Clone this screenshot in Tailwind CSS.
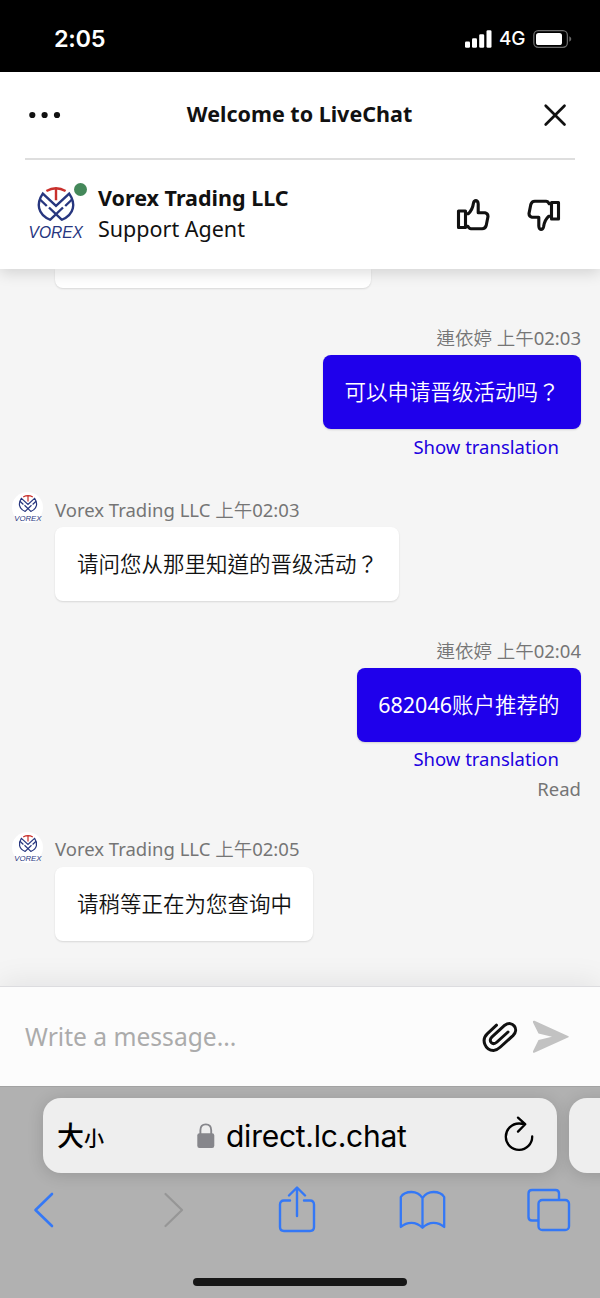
<!DOCTYPE html>
<html lang="zh-Hant">
  <head>
    <meta charset="UTF-8" />
    <meta name="viewport" content="width=device-width, initial-scale=1.0">
    <title>LiveChat</title>
    <script src="https://cdn.jsdelivr.net/npm/@tailwindcss/browser@4"></script>
  </head>
  <body class="w-[600px] h-[1298px] overflow-hidden bg-[#f5f5f5] text-[#111] font-['Noto_Sans','Noto_Sans_CJK_TC',sans-serif]">

    <!-- shared logo -->
    <svg class="hidden">
      <symbol id="vorex" viewBox="0 0 56 56">
        <g fill="none" stroke-width="2.4">
          <path stroke="#c9302c" d="M18.4 6Q28 0.6 37.6 6M28 3V15.2" />
          <g stroke="#27367f">
            <path d="M22.6 35C9 29.5 8.3 18 14.8 8.6L28 20.8L41.2 8.6C47.7 18 47 29.5 33.4 35" />
            <path d="M12 14.5L18.8 21M44 14.5L37.2 21" />
            <path d="M21 22.5L34.2 35.2M35 22.5L21.8 35.2" />
          </g>
        </g>
        <text x="0.5" y="53.3" textLength="54.5" lengthAdjust="spacingAndGlyphs" font-family="Liberation Sans, sans-serif" font-size="15.8" font-style="italic" fill="#27367f">VOREX</text>
      </symbol>
    </svg>

    <div class="flex flex-col h-full">
      <!-- status bar -->
      <div class="h-[72px] shrink-0 bg-black text-white flex items-center justify-between pl-[54px] pr-[28px] pt-[5px] font-['Inter',sans-serif]">
        <span class="text-[23.5px] leading-8 font-semibold tracking-[-0.3px]">2:05</span>
        <div class="flex items-center">
          <svg class="w-[27px] h-[18px]" viewBox="0 0 27 18" fill="#fff">
            <rect x="0" y="11.5" width="5" height="6.3" rx="1.3" />
            <rect x="7" y="8.3" width="5" height="9.5" rx="1.3" />
            <rect x="14.2" y="4.3" width="5" height="13.5" rx="1.3" />
            <rect x="21.5" y="0.2" width="5" height="17.6" rx="1.3" />
          </svg>
          <span class="ml-[7px] w-[34px] text-[19px] leading-6 font-medium tracking-[-0.3px] pt-px">4G</span>
          <svg class="w-[39px] h-[18px]" viewBox="0 0 39 18">
            <rect x="0.8" y="0.7" width="33.6" height="16.6" rx="4.5" fill="none" stroke="#6b6b6b" stroke-width="1.3" />
            <rect x="3" y="3" width="26" height="12" rx="2.6" fill="#fff" />
            <path d="M36.3 6.2Q38.3 7.2 38.3 9T36.3 11.8Z" fill="#6b6b6b" />
          </svg>
        </div>
      </div>

      <!-- chat header -->
      <header class="h-[197px] shrink-0 bg-white px-[25px] relative z-10 shadow-[0_4px_14px_rgba(0,0,0,0.14)]">
        <div class="h-[88px] flex items-center justify-between border-b-2 border-[#dedede] pl-1 pr-[8px]">
          <svg class="w-8 h-6" viewBox="0 0 32 24" fill="#111">
            <circle cx="3.3" cy="12" r="3.1" /><circle cx="15.6" cy="12" r="3.1" /><circle cx="28" cy="12" r="3.1" />
          </svg>
          <h1 class="text-[21.5px] leading-8 font-bold pb-[3px] ml-[-5px]">Welcome to LiveChat</h1>
          <svg class="w-6 h-6" viewBox="0 0 24 24" fill="none" stroke="#111" stroke-width="2.7" stroke-linecap="round">
            <path d="M2.7 2.7L21.5 21.5M21.5 2.7L2.7 21.5" />
          </svg>
        </div>
        <div class="flex items-center h-[109px] pl-[3px] pr-[14px]">
          <div class="relative mt-[-3px]">
            <svg class="w-[56px] h-[56px]"><use href="#vorex" /></svg>
            <span class="absolute right-[-3px] top-[-2px] w-[13px] h-[13px] rounded-full bg-[#44885a]"></span>
          </div>
          <div class="ml-[14px] mt-[-4px] text-[21.5px] leading-[31px]">
            <p class="font-bold">Vorex Trading LLC</p>
            <p>Support Agent</p>
          </div>
          <svg class="ml-auto w-[34px] h-[34px]" viewBox="0 0 34 34" fill="none" stroke="#111" stroke-width="3.1" stroke-linejoin="round">
            <path id="thumb" d="M2.5 13H9.5V29.5H2.5ZM9.5 15.8H12.2Q16.5 12 17.5 5Q18 2.6 20 2.6Q22 2.8 22.2 6V14.8H29Q32 15.5 32 18.5L30.2 27.5Q29.2 30.7 26.2 30.7H15Q13 30.7 11.8 28.2H9.5" />
          </svg>
          <svg class="ml-[37px] w-[34px] h-[34px] rotate-180" viewBox="0 0 34 34" fill="none" stroke="#111" stroke-width="3.1" stroke-linejoin="round">
            <use href="#thumb" />
          </svg>
        </div>
      </header>

      <!-- messages -->
      <main class="flex-1 min-h-0 flex flex-col items-start pl-[55px] pr-[19px] text-[18.5px] leading-[25px] text-[#757575]">
        <div class="w-[316px] h-[19px] rounded-b-lg bg-white shadow-[0_1px_2px_rgba(0,0,0,0.12)]"></div>

        <div class="self-end flex flex-col items-end mt-[37px]">
          <p class="h-[25px] font-[350]">連依婷 上午<span class="font-normal">02:03</span></p>
          <p class="mt-[5px] h-[74px] pb-[2px] px-[21.5px] flex items-center rounded-lg bg-[#1f00eb] text-white text-[21.5px] font-[350] shadow-[0_1px_2px_rgba(0,0,0,0.15)]">可以申请晋级活动吗？</p>
          <p class="mt-[5px] h-[25px] mr-[22px] text-[#2000e0]">Show translation</p>
        </div>

        <div class="relative mt-[38px]">
          <div class="absolute left-[-43px] top-[-5px] w-[31px] h-[31px] rounded-full bg-white flex items-center justify-center">
            <svg class="w-[28px] h-[28px] shrink-0"><use href="#vorex" /></svg>
          </div>
          <p class="h-[25px]">Vorex Trading LLC <span class="font-[350]">上午</span>02:03</p>
          <p class="mt-[5px] h-[74px] pb-[2px] w-[344px] px-[22px] flex items-center rounded-lg bg-white text-[#111] text-[21.5px] font-[350] whitespace-nowrap shadow-[0_1px_2px_rgba(0,0,0,0.12)]">请问您从那里知道的晋级活动？</p>
        </div>

        <div class="self-end flex flex-col items-end mt-[37px]">
          <p class="h-[25px] font-[350]">連依婷 上午<span class="font-normal">02:04</span></p>
          <p class="mt-[5px] h-[74px] pb-[2px] px-[21.5px] flex items-center rounded-lg bg-[#1f00eb] text-white text-[21.5px] shadow-[0_1px_2px_rgba(0,0,0,0.15)]">682046<span class="font-[350]">账户推荐的</span></p>
          <p class="mt-[4px] h-[25px] mr-[22px] text-[#2000e0]">Show translation</p>
          <p class="mt-[5px] h-[25px]">Read</p>
        </div>

        <div class="relative mt-[35px]">
          <div class="absolute left-[-43px] top-[-4px] w-[31px] h-[31px] rounded-full bg-white flex items-center justify-center">
            <svg class="w-[28px] h-[28px] shrink-0"><use href="#vorex" /></svg>
          </div>
          <p class="h-[25px]">Vorex Trading LLC <span class="font-[350]">上午</span>02:05</p>
          <p class="mt-[6px] h-[74px] pb-[2px] w-[258px] px-[22px] flex items-center rounded-lg bg-white text-[#111] text-[21.5px] font-[350] whitespace-nowrap shadow-[0_1px_2px_rgba(0,0,0,0.12)]">请稍等正在为您查询中</p>
        </div>
      </main>

      <!-- message box -->
      <div class="h-[100px] shrink-0 relative bg-[#fcfcfc] border-t border-[#dcdcdf] flex items-center pl-[25px] pr-[30px] shadow-[0_-4px_28px_rgba(0,0,20,0.08)]">
        <span class="text-[24.6px] leading-8 text-[#ababab]">Write a message...</span>
        <svg class="ml-auto w-[36px] h-[34px] mt-[2px]" viewBox="0 0 36 34" fill="none" stroke="#111" stroke-width="3" stroke-linecap="round" stroke-linejoin="round">
          <path d="M14.5 4.2L5.2 12.8C-1.2 19 3.4 29.5 11.6 29.4C14.6 29.3 16.5 27.8 18.4 26L31 14.6C37.6 8.2 30.5 -1.2 22.8 4.2L10 15.8C5.6 20 10.6 25 15 21L26 11" />
        </svg>
        <svg class="ml-[14px] w-[38px] h-[34px]" viewBox="0 0 38 34" fill="#c2c2c2">
          <path d="M2.5 0.8Q0.4 0.2 1 2.4L6.5 13.4L20 16.8L6.5 20L1 31.2Q0.4 33.5 2.8 32.6L36.5 17.3Q37.2 16.8 36.5 16.3Z" />
        </svg>
      </div>

      <!-- browser toolbar -->
      <footer class="h-[212px] shrink-0 relative overflow-hidden bg-[#b1b1b1] border-t border-[#a2a2a2] flex flex-col font-['Inter','Noto_Sans_CJK_TC',sans-serif]">
        <div class="flex gap-[12px] pl-[43px] mt-[11px]">
          <div class="w-[514px] h-[75px] shrink-0 rounded-[18px] bg-[#eee] shadow-[0_2px_16px_rgba(0,0,0,0.15)] flex items-center pl-[14px] pr-[22px] text-black">
            <span class="w-[140px] pt-[5px] flex items-baseline leading-8 font-medium"><span class="text-[27px]">大</span><span class="text-[20px]">小</span></span>
            <svg class="w-[18px] h-[26px]" viewBox="0 0 18 26">
              <rect x="0.3" y="10.2" width="17" height="14.8" rx="2.2" fill="#86868b" />
              <path d="M3.4 11V7.2Q3.4 1.4 8.8 1.4T14.2 7.2V11" fill="none" stroke="#86868b" stroke-width="1.9" />
            </svg>
            <span class="ml-[11px] text-[30px] leading-9 tracking-[-0.25px]">direct.lc.chat</span>
            <svg class="ml-auto w-[32px] h-[36px] mt-[-3px]" viewBox="0 0 32 36" fill="none" stroke="#000" stroke-width="2.3" stroke-linecap="round" stroke-linejoin="round">
              <path d="M29.2 20.5A13.2 13.2 0 1 1 16 7.5Q19 7.5 22 8.2M15 1.6L22.2 8.2L15 15.6" />
            </svg>
          </div>
          <div class="w-[60px] h-[75px] shrink-0 rounded-[18px] bg-[#eee] shadow-[0_2px_16px_rgba(0,0,0,0.15)]"></div>
        </div>
        <div class="flex items-center justify-between h-[74px] pl-[33px] pr-[29px]">
          <svg class="w-[22px] h-[48px]" viewBox="0 0 22 48" fill="none" stroke="#3478f6" stroke-width="2.6" stroke-linecap="round" stroke-linejoin="round"><path d="M19 8L2.5 24L19 40" /></svg>
          <svg class="w-[22px] h-[48px] ml-[26px]" viewBox="0 0 22 48" fill="none" stroke="#969696" stroke-width="2.2" stroke-linecap="round" stroke-linejoin="round"><path d="M2.5 8L19 24L2.5 40" /></svg>
          <svg class="w-[38px] h-[48px] ml-[12px]" viewBox="0 0 38 48" fill="none" stroke="#3478f6" stroke-width="2.4" stroke-linecap="round" stroke-linejoin="round">
            <path d="M12 14.5H6Q2 14.5 2 18.5V41Q2 45 6 45H32Q36 45 36 41V18.5Q36 14.5 32 14.5H26M19 30V2M11 9.5L19 1.5L27 9.5" />
          </svg>
          <svg class="w-[48px] h-[48px]" viewBox="0 0 48 48" fill="none" stroke="#3478f6" stroke-width="2.3" stroke-linecap="round" stroke-linejoin="round">
            <path d="M24.5 12Q20.5 6 13.5 6Q6 6 2.8 11V41Q7.5 36.8 13.5 36.8T24.5 41.8Q29.5 36.8 35.5 36.8T46.2 41V11Q43 6 35.5 6Q28.5 6 24.5 12V41.5" />
          </svg>
          <svg class="w-[44px] h-[48px]" viewBox="0 0 44 48" fill="none" stroke="#3478f6" stroke-width="2.4" stroke-linejoin="round">
            <path d="M11 34.5H5Q1.5 34.5 1.5 31V7.5Q1.5 4 5 4H28.5Q32 4 32 7.5V13.5" />
            <rect x="11.5" y="14" width="30.5" height="30" rx="3.8" />
          </svg>
        </div>
        <div class="mx-auto mt-auto mb-[12px] w-[214px] h-2 rounded-full bg-[#171717]"></div>
      </footer>
    </div>
  </body>
</html>
